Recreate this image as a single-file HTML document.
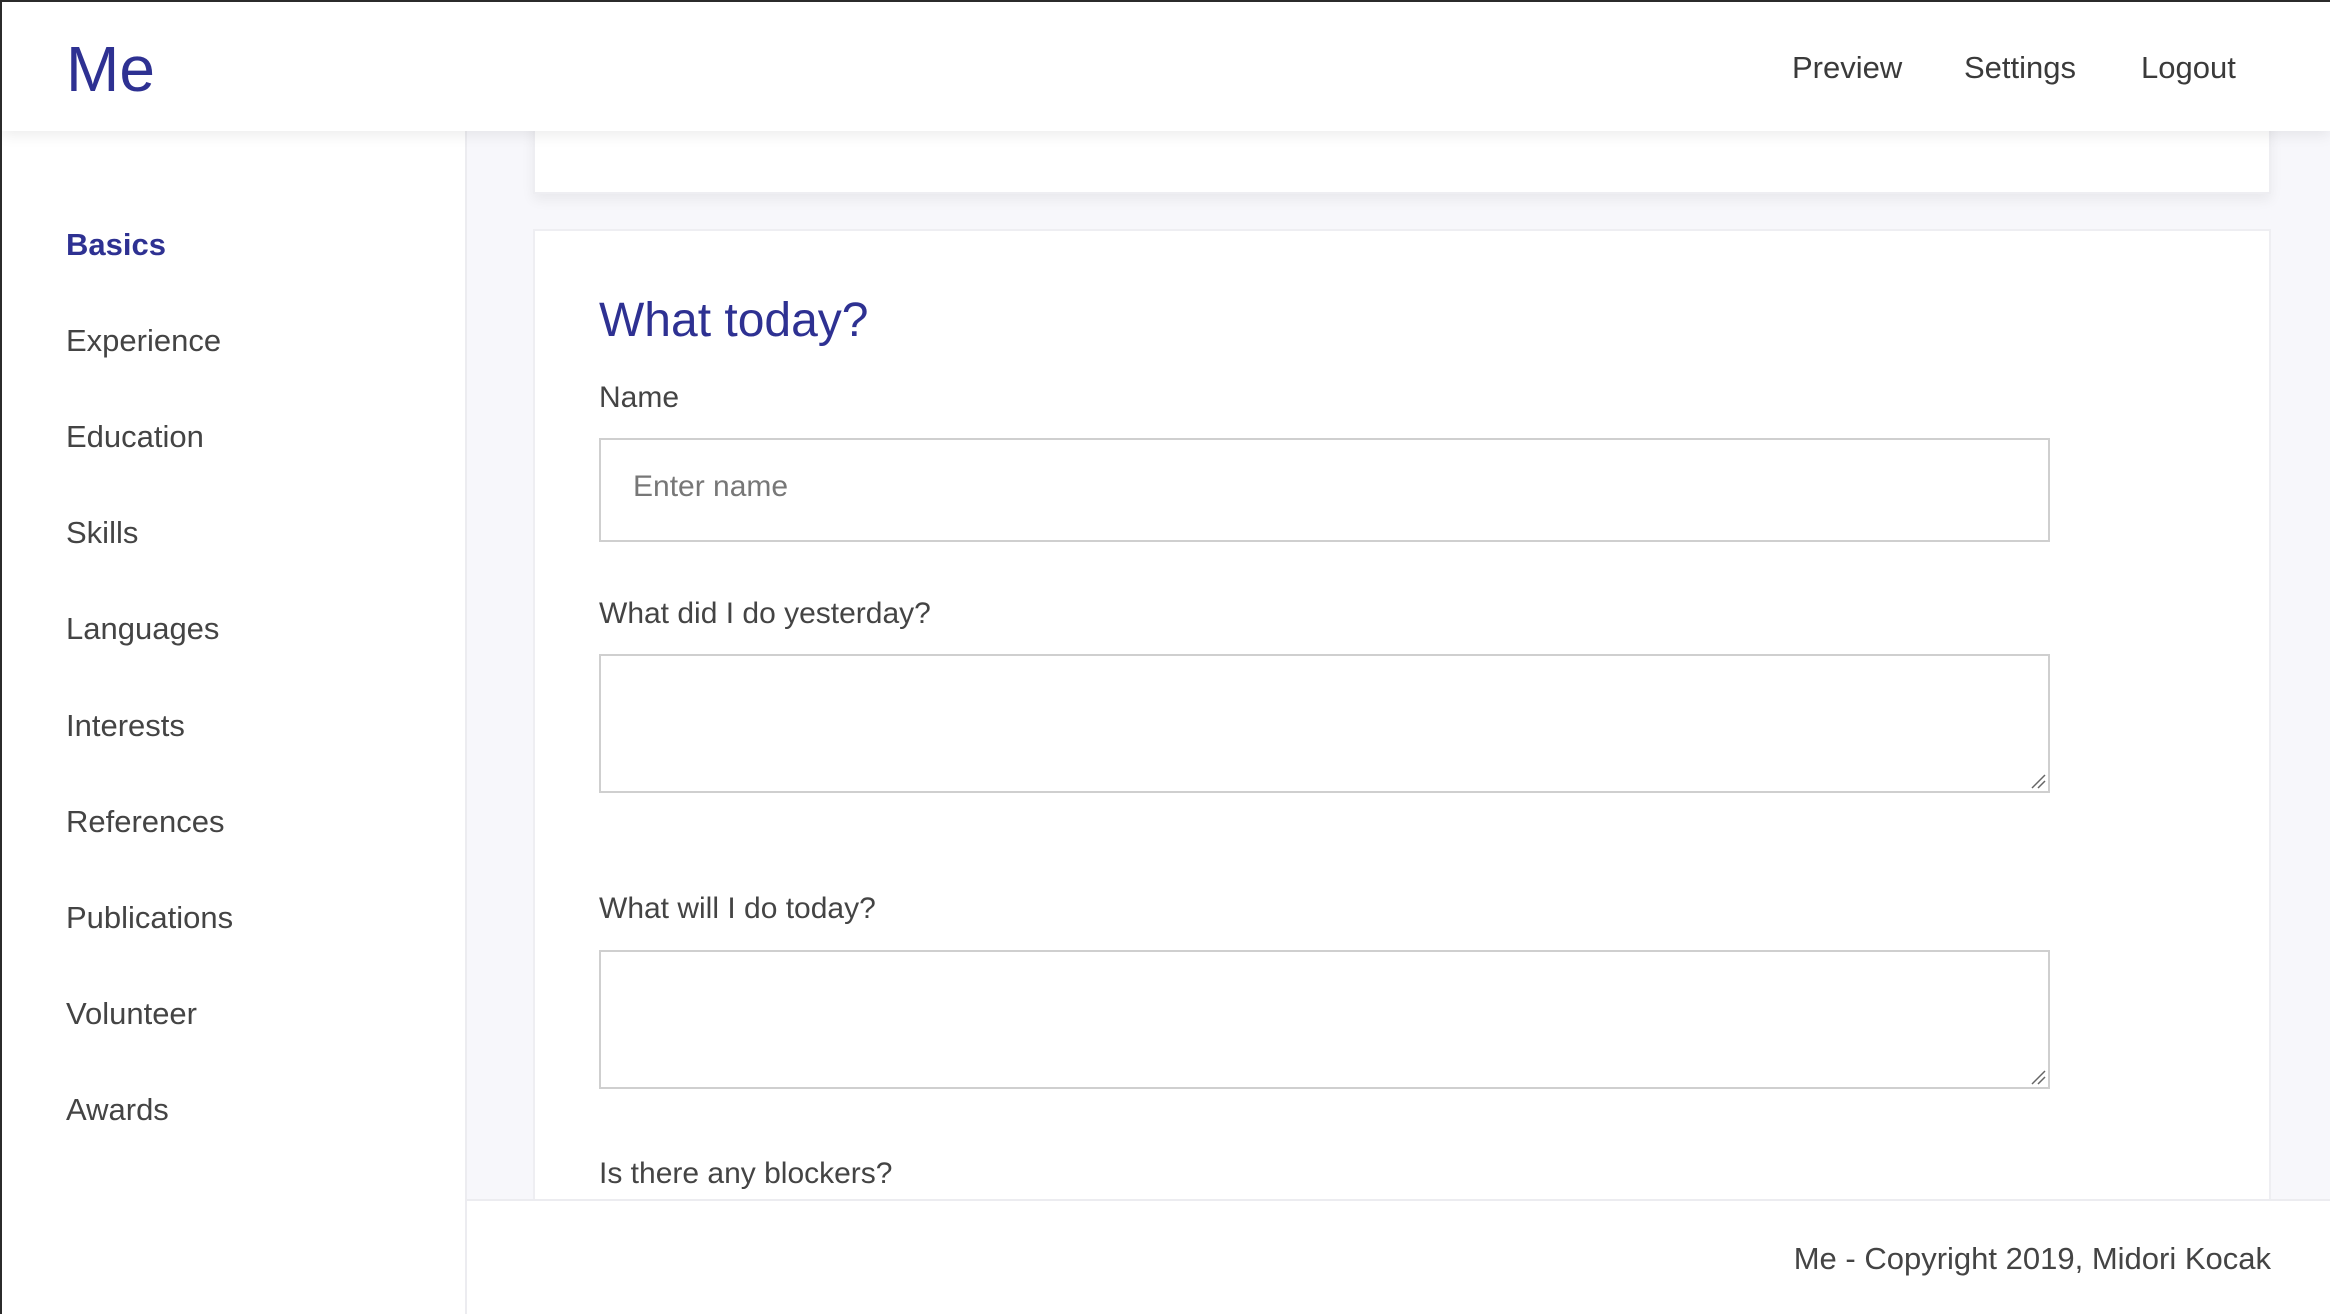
<!DOCTYPE html>
<html><head><meta charset="utf-8"><style>
*{box-sizing:border-box;margin:0;padding:0}
body{width:2330px;height:1314px;overflow:hidden;font-family:"Liberation Sans",sans-serif;background:#2b2b2b;position:relative}
.win{position:absolute;left:2px;top:2px;right:0;bottom:0;background:#f7f7fb;overflow:hidden}
.hdr{position:absolute;left:0;top:0;right:0;height:129px;background:#fff;box-shadow:0 4px 14px rgba(0,0,0,.08);z-index:3}
.logo{position:absolute;left:64px;top:24px;font-size:64px;color:#2e3192;line-height:86px}
.nav{position:absolute;top:46px;font-size:31px;color:#3a3a3a;line-height:40px}
.side{position:absolute;left:0;top:129px;width:465px;bottom:0;background:#fff;border-right:2px solid #ececf0}
.side div{position:absolute;left:64px;font-size:31px;color:#444;line-height:40px}
.card{position:absolute;left:531px;width:1738px;background:#fff;border:2px solid #eeeef2}
.lbl{position:absolute;left:597px;font-size:30px;color:#444;line-height:40px}
.box{position:absolute;left:597px;width:1451px;border:2px solid #cfcfcf;background:#fff}
.box svg{position:absolute;right:2px;bottom:2px}
.foot{position:absolute;left:465px;right:0;top:1197px;bottom:0;background:#fff;border-top:2px solid #ececf0;z-index:2}
</style></head><body><div class="win">
<div class="hdr"><div class="logo">Me</div>
<div class="nav" style="left:1790px">Preview</div>
<div class="nav" style="left:1962px">Settings</div>
<div class="nav" style="left:2139px">Logout</div></div>
<div class="side">
<div style="top:94px;font-weight:bold;color:#2e3192">Basics</div>
<div style="top:190px">Experience</div>
<div style="top:286px">Education</div>
<div style="top:382px">Skills</div>
<div style="top:478px">Languages</div>
<div style="top:575px">Interests</div>
<div style="top:671px">References</div>
<div style="top:767px">Publications</div>
<div style="top:863px">Volunteer</div>
<div style="top:959px">Awards</div>
</div>
<div class="card" style="top:100px;height:92px;box-shadow:0 6px 12px rgba(0,0,0,.06)"></div>
<div class="card" style="top:227px;height:1100px"></div>
<div class="lbl" style="top:291px;font-size:48px;color:#2e3192;line-height:56px">What today?</div>
<div class="lbl" style="top:376px">Name</div>
<div class="box" style="top:436px;height:104px"><span style="position:absolute;left:32px;top:30px;font-size:30px;color:#777">Enter name</span></div>
<div class="lbl" style="top:592px">What did I do yesterday?</div>
<div class="box" style="top:652px;height:139px"><svg width="16" height="16"><path d="M2 15L15 2M8 15L15 8" stroke="#666" stroke-width="1.5"/></svg></div>
<div class="lbl" style="top:887px">What will I do today?</div>
<div class="box" style="top:948px;height:139px"><svg width="16" height="16"><path d="M2 15L15 2M8 15L15 8" stroke="#666" stroke-width="1.5"/></svg></div>
<div class="lbl" style="top:1152px">Is there any blockers?</div>
<div class="foot"><div style="position:absolute;right:59px;top:40px;font-size:31px;color:#444">Me - Copyright 2019, Midori Kocak</div></div>
</div></body></html>
